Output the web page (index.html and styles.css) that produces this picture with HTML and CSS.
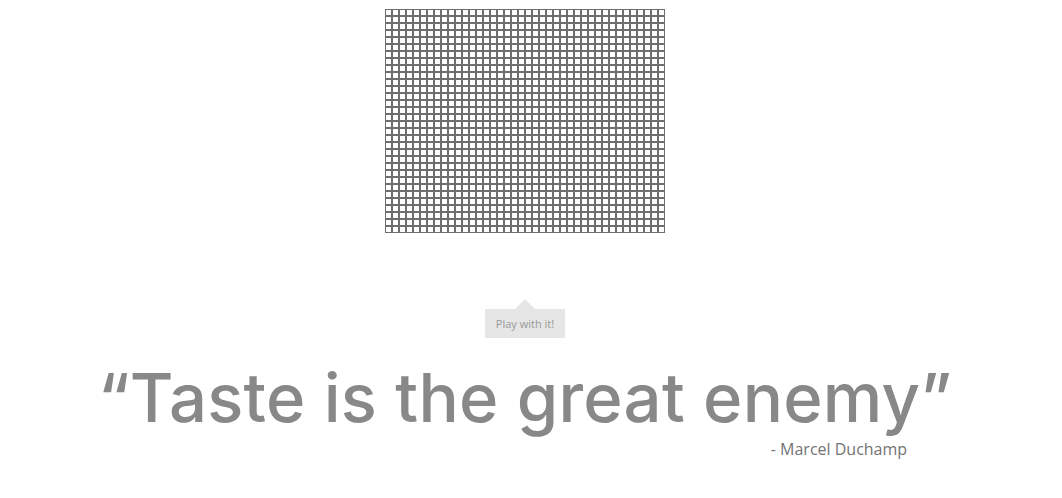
FILE: index.html
```html
<!DOCTYPE html>
<html>
<head>
<meta charset="utf-8">
<link rel="stylesheet" href="styles.css">
</head>
<body>
<div class="page">
  <div class="grid" id="grid"></div>
  <div class="tip">Play with it!</div>
  <div class="quote-wrap">
    <h1 class="quote">“Taste is the great enemy”</h1>
    <div class="author">- Marcel Duchamp</div>
  </div>
</div>
<script src="script.js"></script>
</body>
</html>
```
FILE: styles.css
```css
html, body {
  margin: 0;
  padding: 0;
  background: #fff;
}
.page {
  width: 1050px;
  display: flex;
  flex-direction: column;
  align-items: center;
  padding-top: 9px;
}
.grid {
  display: grid;
  grid-template-columns: repeat(40, 7px);
  grid-auto-rows: 7px;
}
.cell {
  box-sizing: border-box;
  border: 1px solid #6e6e6e;
  background: #fff;
}
.tip {
  position: relative;
  margin-top: 76px;
  background: #e6e6e6;
  color: #999;
  font-family: "Open Sans", sans-serif;
  font-size: 11px;
  line-height: 29px;
  height: 29px;
  padding: 0 11px;
}
.tip::before {
  content: "";
  position: absolute;
  left: 50%;
  top: -10px;
  margin-left: -10px;
  border-left: 10px solid transparent;
  border-right: 10px solid transparent;
  border-bottom: 10px solid #e6e6e6;
}
.quote-wrap {
  display: flex;
  flex-direction: column;
  align-items: flex-end;
}
.quote {
  margin: 20px 0 0;
  font-family: Inter, sans-serif;
  font-weight: 500;
  font-size: 67px;
  line-height: 80px;
  color: #888;
  letter-spacing: 0.25px;
}
.author {
  margin-top: 0;
  margin-right: 45px;
  font-family: "Open Sans", sans-serif;
  font-size: 16px;
  line-height: 22px;
  color: #737373;
}
```
FILE: script.js
```js
var g = document.getElementById('grid');
var html = '';
for (var i = 0; i < 40 * 32; i++) html += '<div class="cell"></div>';
g.innerHTML = html;
```
